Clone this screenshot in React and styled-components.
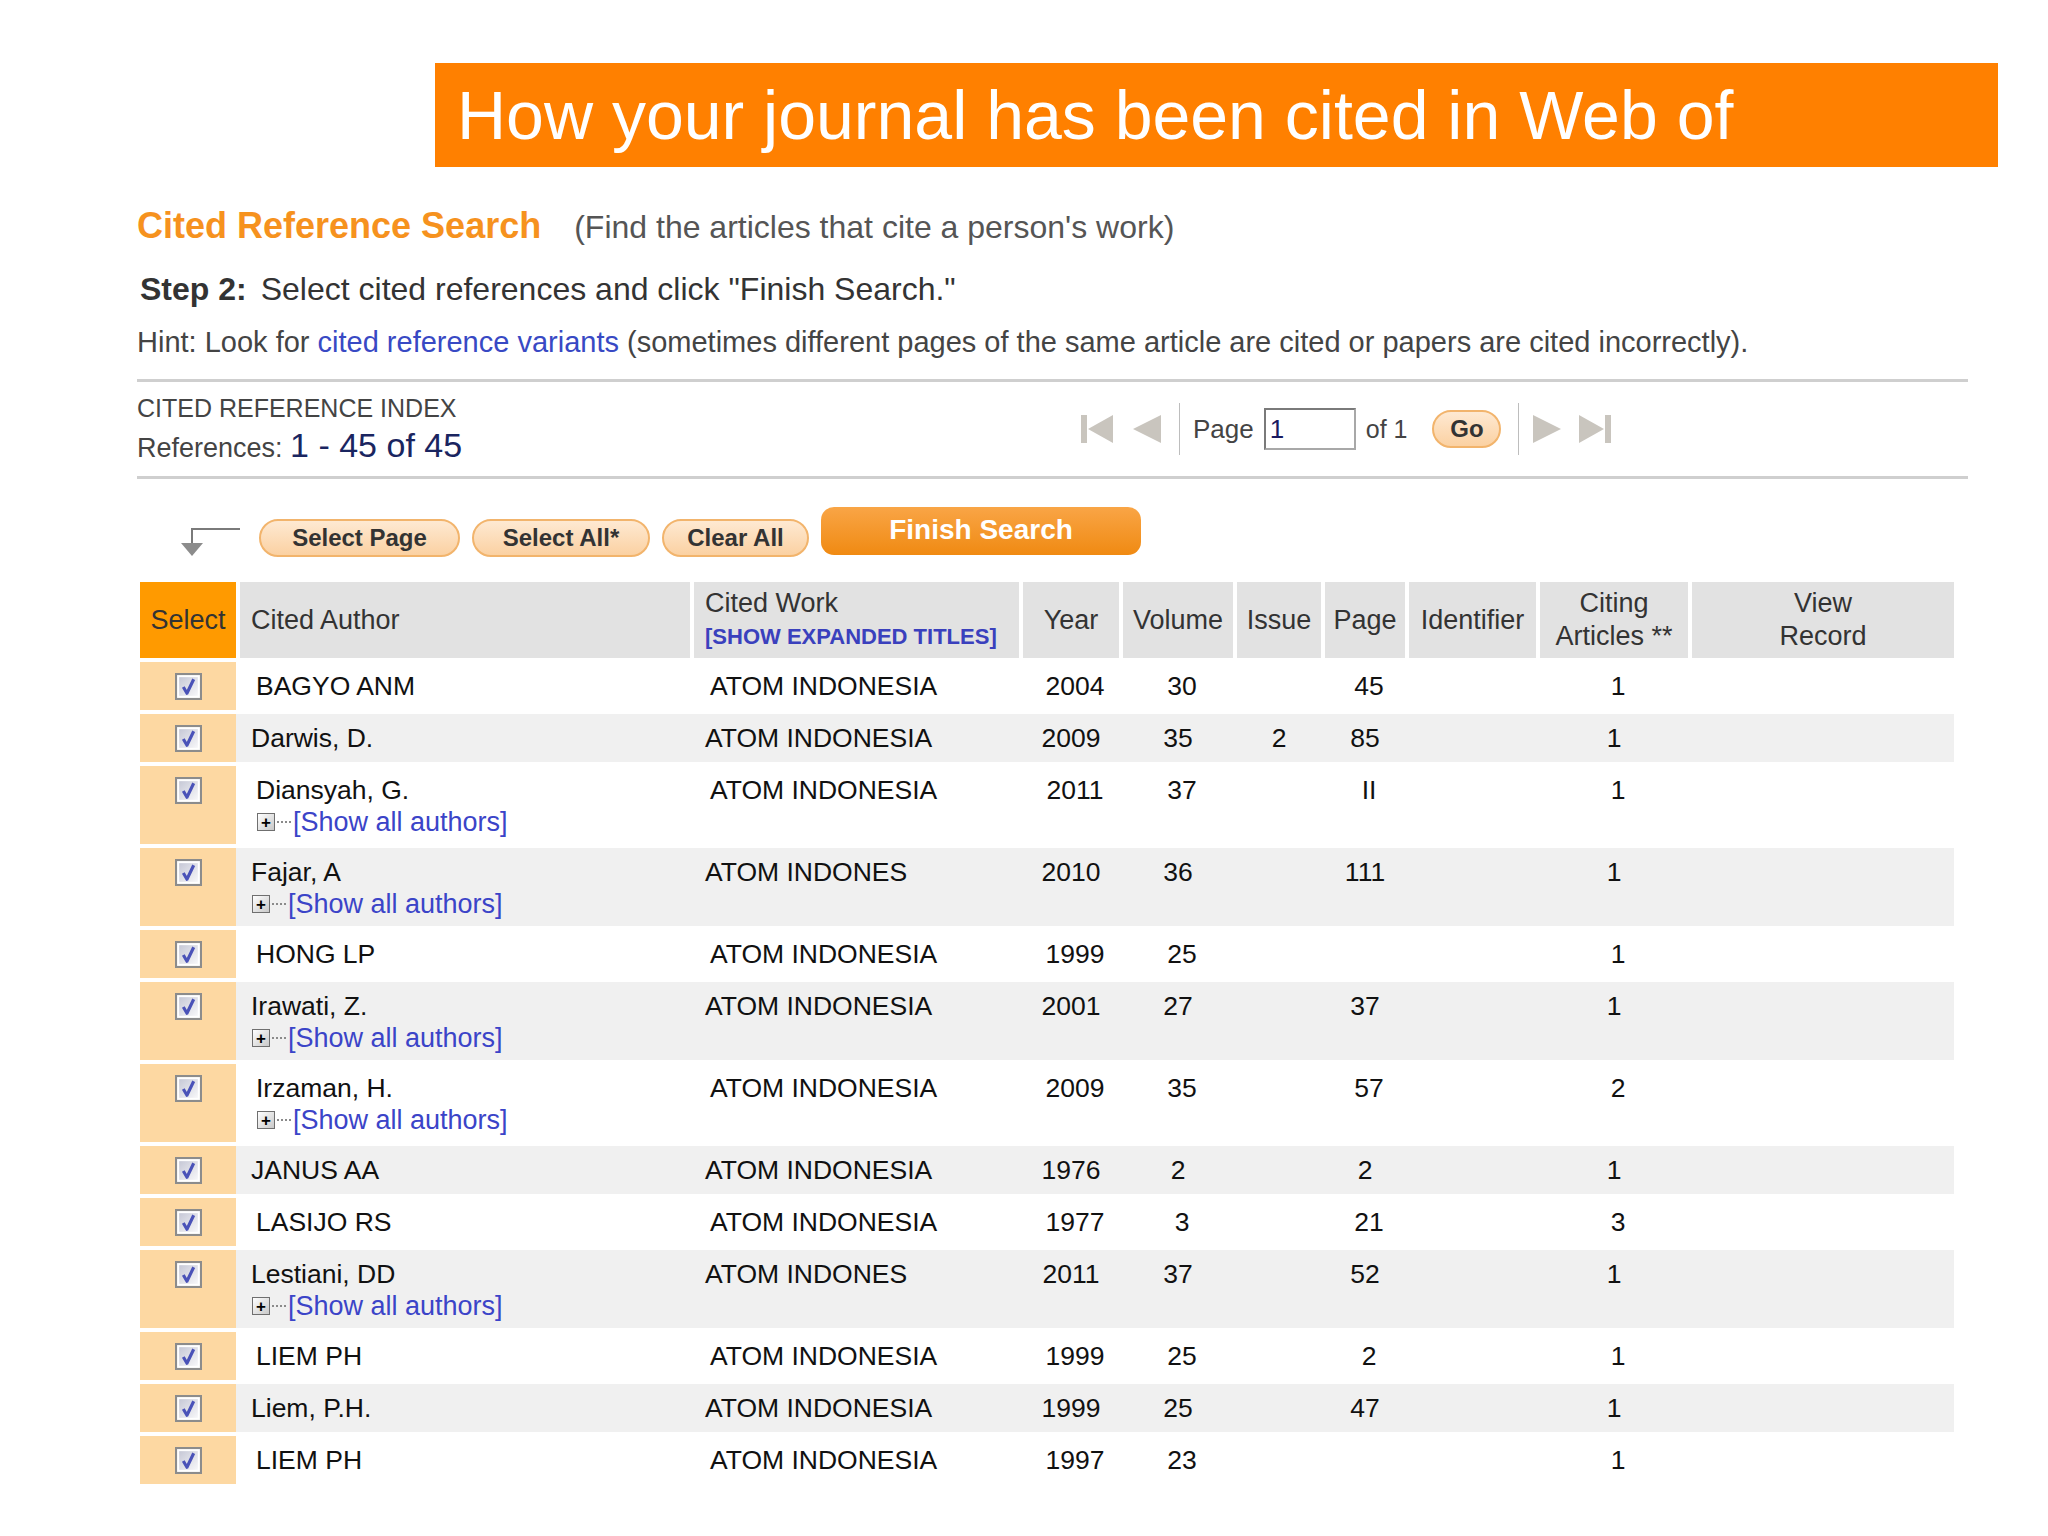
import React from 'react';
import styled, { createGlobalStyle } from 'styled-components';

const GlobalStyle = createGlobalStyle`
  body {
    margin: 0;
    background: #ffffff;
    font-family: "Liberation Sans", Arial, sans-serif;
  }
`;

const COLS = '96px 450px 325px 96px 110px 84px 80px 127px 148px 262px';

const Page = styled.div`
  width: 2048px;
  min-height: 1536px;
  padding-top: 63px;
  box-sizing: border-box;
`;

const Banner = styled.div`
  margin-left: 435px;
  width: 1563px;
  height: 104px;
  box-sizing: border-box;
  padding-left: 22px;
  background: #ff8000;
  color: #ffffff;
  font-size: 68px;
  line-height: 1;
  display: flex;
  align-items: center;
  white-space: nowrap;
`;

const Content = styled.div`
  margin-left: 137px;
  width: 1831px;
`;

const TitleRow = styled.div`
  margin-top: 34px;
  height: 50px;
  line-height: 50px;
  display: flex;
  align-items: baseline;
  white-space: nowrap;
`;

const Title = styled.span`
  color: #f6921e;
  font-weight: bold;
  font-size: 36px;
`;

const Subtitle = styled.span`
  margin-left: 33px;
  color: #555555;
  font-size: 32px;
`;

const StepLine = styled.div`
  margin-top: 18px;
  padding-left: 3px;
  height: 40px;
  line-height: 40px;
  font-size: 32px;
  color: #333333;
  white-space: nowrap;
`;

const StepLabel = styled.b`
  margin-right: 14px;
`;

const Hint = styled.div`
  margin-top: 15px;
  height: 36px;
  line-height: 36px;
  font-size: 29px;
  color: #444444;
  white-space: nowrap;
`;

const HintLink = styled.span`
  color: #3849c4;
`;

const IndexBar = styled.div`
  margin-top: 19px;
  height: 100px;
  box-sizing: border-box;
  border-top: 3px solid #cfcfcf;
  border-bottom: 3px solid #cfcfcf;
  display: flex;
  align-items: center;
`;

const IndexInfo = styled.div`
  width: 943px;
  display: flex;
  flex-direction: column;
  color: #444444;
  white-space: nowrap;
`;

const IndexTitle = styled.div`
  font-size: 25px;
  line-height: 34px;
`;

const RefLine = styled.div`
  font-size: 27px;
  line-height: 40px;
`;

const RefCount = styled.span`
  font-size: 34px;
  color: #1a2560;
`;

const Pager = styled.div`
  display: flex;
  align-items: center;
  color: #444444;
  white-space: nowrap;
`;

const PagerIcon = styled.svg`
  display: block;
  margin-left: ${p => p.$ml || 0}px;
  fill: #c9c5be;
`;

const Divider = styled.div`
  width: 1px;
  height: 52px;
  background: #bdbdbd;
  margin-left: ${p => p.$ml || 0}px;
`;

const PagerText = styled.span`
  font-size: ${p => p.$size || 26}px;
  margin-left: ${p => p.$ml || 0}px;
`;

const PageInput = styled.div`
  margin-left: 10px;
  width: 92px;
  height: 42px;
  box-sizing: border-box;
  border: 2px solid #7a7a7a;
  border-right-color: #a8a8a8;
  border-bottom-color: #a8a8a8;
  padding-left: 4px;
  font-size: 26px;
  line-height: 38px;
  color: #1a1a60;
`;

const PillButton = styled.div`
  margin-left: ${p => p.$ml || 0}px;
  width: ${p => p.$w}px;
  height: 38px;
  box-sizing: border-box;
  border: 2px solid #f2b46c;
  border-radius: 19px;
  background: linear-gradient(#fee9d2, #fbd1a2);
  color: #333333;
  font-weight: bold;
  font-size: ${p => p.$size || 24}px;
  display: flex;
  align-items: center;
  justify-content: center;
  white-space: nowrap;
`;

const ActionRow = styled.div`
  margin-top: 28px;
  height: 50px;
  display: flex;
  align-items: flex-end;
  gap: 12px;
`;

const BulkArrow = styled.svg`
  display: block;
  margin-left: 43px;
  margin-right: 7px;
`;

const FinishButton = styled.div`
  width: 320px;
  height: 48px;
  margin-bottom: 2px;
  border-radius: 13px;
  background: linear-gradient(#f9a546, #f08a12);
  color: #ffffff;
  font-weight: bold;
  font-size: 28px;
  display: flex;
  align-items: center;
  justify-content: center;
  padding-bottom: 3px;
  box-sizing: border-box;
`;

const HeaderRow = styled.div`
  margin-top: 25px;
  margin-left: 3px;
  height: 76px;
  display: grid;
  grid-template-columns: ${COLS};
  column-gap: 4px;
`;

const HeadCell = styled.div`
  background: ${p => (p.$select ? '#ff9a00' : '#e2e2e2')};
  display: flex;
  flex-direction: column;
  justify-content: center;
  align-items: ${p => (p.$left ? 'flex-start' : 'center')};
  padding-left: ${p => (p.$left ? 11 : 0)}px;
  font-size: 27px;
  line-height: 33px;
  color: #333333;
  white-space: nowrap;
  text-align: center;
`;

const ExpandLink = styled.span`
  color: #3a40bd;
  font-weight: bold;
  font-size: 22px;
`;

const Body = styled.div`
  margin-top: 4px;
  margin-left: 3px;
  width: 1814px;
  display: flex;
  flex-direction: column;
  gap: 4px;
`;

const Row = styled.div`
  display: grid;
  grid-template-columns: ${COLS};
  column-gap: 4px;
  min-height: 48px;
  background: ${p => (p.$alt ? '#f0f0f0' : '#ffffff')};
`;

const SelectCell = styled.div`
  background: #fdd8a2;
  display: flex;
  justify-content: center;
  padding-top: 11px;
`;

const TextCell = styled.div`
  padding: 8px 0 6px ${p => (p.$shift ? 16 : 11)}px;
  font-size: 26.5px;
  line-height: 32px;
  color: #111111;
  white-space: nowrap;
`;

const NumCell = styled.div`
  padding: 8px 0 6px ${p => (p.$shift ? 8 : 0)}px;
  font-size: 26.5px;
  line-height: 32px;
  color: #111111;
  text-align: center;
`;

const MoreLine = styled.div`
  display: flex;
  align-items: center;
  margin-left: 1px;
`;

const PlusBox = styled.span`
  width: 18px;
  height: 18px;
  box-sizing: border-box;
  border: 1px solid #6f6f6f;
  background: linear-gradient(135deg, #ffffff, #c9c9c9);
  display: flex;
  align-items: center;
  justify-content: center;
  font-size: 17px;
  font-weight: bold;
  line-height: 1;
  color: #000000;
`;

const Leader = styled.span`
  width: 14px;
  margin: 0 2px;
  border-bottom: 2px dotted #8a8a8a;
`;

const AuthorsLink = styled.span`
  color: #3b44c8;
  font-size: 27px;
`;

const rows = [
  { author: 'BAGYO ANM', work: 'ATOM INDONESIA', year: '2004', vol: '30', issue: '', page: '45', citing: '1' },
  { author: 'Darwis, D.', work: 'ATOM INDONESIA', year: '2009', vol: '35', issue: '2', page: '85', citing: '1' },
  { author: 'Diansyah, G.', more: true, work: 'ATOM INDONESIA', year: '2011', vol: '37', issue: '', page: 'II', citing: '1' },
  { author: 'Fajar, A', more: true, work: 'ATOM INDONES', year: '2010', vol: '36', issue: '', page: '111', citing: '1' },
  { author: 'HONG LP', work: 'ATOM INDONESIA', year: '1999', vol: '25', issue: '', page: '', citing: '1' },
  { author: 'Irawati, Z.', more: true, work: 'ATOM INDONESIA', year: '2001', vol: '27', issue: '', page: '37', citing: '1' },
  { author: 'Irzaman, H.', more: true, work: 'ATOM INDONESIA', year: '2009', vol: '35', issue: '', page: '57', citing: '2' },
  { author: 'JANUS AA', work: 'ATOM INDONESIA', year: '1976', vol: '2', issue: '', page: '2', citing: '1' },
  { author: 'LASIJO RS', work: 'ATOM INDONESIA', year: '1977', vol: '3', issue: '', page: '21', citing: '3' },
  { author: 'Lestiani, DD', more: true, work: 'ATOM INDONES', year: '2011', vol: '37', issue: '', page: '52', citing: '1' },
  { author: 'LIEM PH', work: 'ATOM INDONESIA', year: '1999', vol: '25', issue: '', page: '2', citing: '1' },
  { author: 'Liem, P.H.', work: 'ATOM INDONESIA', year: '1999', vol: '25', issue: '', page: '47', citing: '1' },
  { author: 'LIEM PH', work: 'ATOM INDONESIA', year: '1997', vol: '23', issue: '', page: '', citing: '1' },
];

const CheckBox = () => (
  <svg width="27" height="27" viewBox="0 0 26 26">
    <defs>
      <linearGradient id="cbFill" x1="0" y1="0" x2="1" y2="1">
        <stop offset="0" stopColor="#c6c8d6" />
        <stop offset="1" stopColor="#f7f7f9" />
      </linearGradient>
    </defs>
    <rect x="1" y="1" width="24" height="24" fill="#ffffff" stroke="#8c8c8c" strokeWidth="2" />
    <rect x="4" y="4" width="18" height="18" fill="url(#cbFill)" />
    <path d="M8 13.5 L11.5 19.5 L18 6" fill="none" stroke="#4a52b8" strokeWidth="3" strokeLinejoin="round" />
  </svg>
);

const ReferenceRow = ({ r, index }) => {
  const shift = index % 2 === 0;
  return (
    <Row $alt={!shift}>
      <SelectCell>
        <CheckBox />
      </SelectCell>
      <TextCell $shift={shift}>
        <div>{r.author}</div>
        {r.more && (
          <MoreLine>
            <PlusBox>+</PlusBox>
            <Leader />
            <AuthorsLink>[Show all authors]</AuthorsLink>
          </MoreLine>
        )}
      </TextCell>
      <TextCell $shift={shift}>{r.work}</TextCell>
      <NumCell $shift={shift}>{r.year}</NumCell>
      <NumCell $shift={shift}>{r.vol}</NumCell>
      <NumCell $shift={shift}>{r.issue}</NumCell>
      <NumCell $shift={shift}>{r.page}</NumCell>
      <NumCell $shift={shift}></NumCell>
      <NumCell $shift={shift}>{r.citing}</NumCell>
      <NumCell $shift={shift}></NumCell>
    </Row>
  );
};

const App = () => (
  <Page>
    <GlobalStyle />
    <Banner>How your journal has been cited in Web of</Banner>
    <Content>
      <TitleRow>
        <Title>Cited Reference Search</Title>
        <Subtitle>(Find the articles that cite a person's work)</Subtitle>
      </TitleRow>
      <StepLine>
        <StepLabel>Step 2:</StepLabel>Select cited references and click "Finish Search."
      </StepLine>
      <Hint>
        Hint: Look for <HintLink>cited reference variants</HintLink> (sometimes different pages of the same article are cited or papers are cited incorrectly).
      </Hint>

      <IndexBar>
        <IndexInfo>
          <IndexTitle>CITED REFERENCE INDEX</IndexTitle>
          <RefLine>
            References: <RefCount>1 - 45 of 45</RefCount>
          </RefLine>
        </IndexInfo>
        <Pager>
          <PagerIcon width="34" height="30" viewBox="0 0 34 30">
            <rect x="1" y="1" width="6" height="28" />
            <path d="M33 1 L8 15 L33 29 Z" />
          </PagerIcon>
          <PagerIcon $ml={17} width="31" height="30" viewBox="0 0 31 30">
            <path d="M30 1 L2 15 L30 29 Z" />
          </PagerIcon>
          <Divider $ml={17} />
          <PagerText $ml={13}>Page</PagerText>
          <PageInput>1</PageInput>
          <PagerText $ml={10} $size={25}>of 1</PagerText>
          <PillButton $ml={25} $w={69}>Go</PillButton>
          <Divider $ml={17} />
          <PagerIcon $ml={13} width="31" height="30" viewBox="0 0 31 30">
            <path d="M1 1 L29 15 L1 29 Z" />
          </PagerIcon>
          <PagerIcon $ml={15} width="34" height="30" viewBox="0 0 34 30">
            <path d="M1 1 L26 15 L1 29 Z" />
            <rect x="27" y="1" width="6" height="28" />
          </PagerIcon>
        </Pager>
      </IndexBar>

      <ActionRow>
        <BulkArrow width="60" height="30" viewBox="0 0 60 30">
          <path d="M60 2 H12 V17" fill="none" stroke="#7a7a7a" strokeWidth="2" />
          <path d="M1 16 H23 L12 29 Z" fill="#8c8c8c" />
        </BulkArrow>
        <PillButton $w={201}>Select Page</PillButton>
        <PillButton $w={178}>Select All*</PillButton>
        <PillButton $w={147}>Clear All</PillButton>
        <FinishButton>Finish Search</FinishButton>
      </ActionRow>

      <HeaderRow>
        <HeadCell $select>Select</HeadCell>
        <HeadCell $left>Cited Author</HeadCell>
        <HeadCell $left>
          <div>Cited Work</div>
          <ExpandLink>[SHOW EXPANDED TITLES]</ExpandLink>
        </HeadCell>
        <HeadCell>Year</HeadCell>
        <HeadCell>Volume</HeadCell>
        <HeadCell>Issue</HeadCell>
        <HeadCell>Page</HeadCell>
        <HeadCell>Identifier</HeadCell>
        <HeadCell>
          <div>Citing</div>
          <div>Articles **</div>
        </HeadCell>
        <HeadCell>
          <div>View</div>
          <div>Record</div>
        </HeadCell>
      </HeaderRow>

      <Body>
        {rows.map((r, i) => (
          <ReferenceRow key={i} r={r} index={i} />
        ))}
      </Body>
    </Content>
  </Page>
);

export default App;
